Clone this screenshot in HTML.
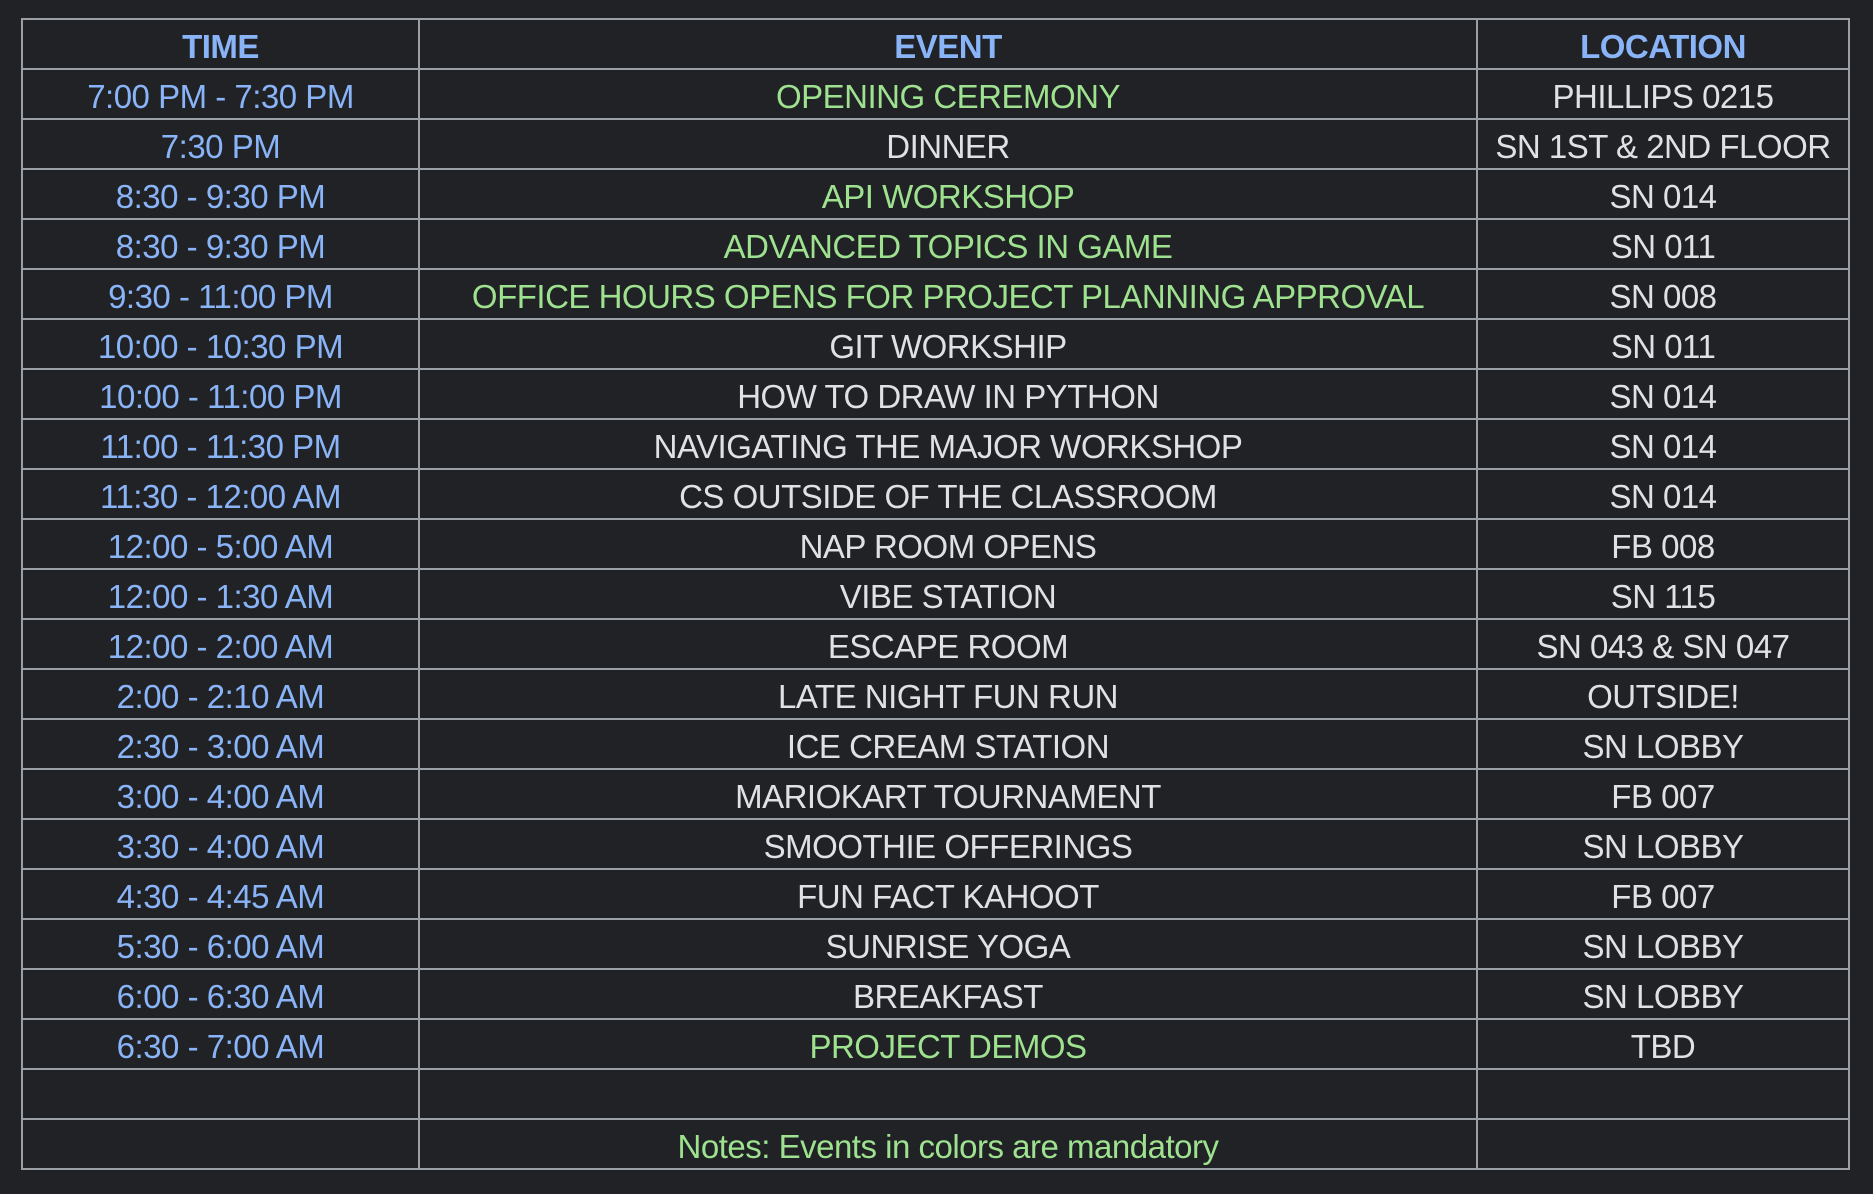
<!DOCTYPE html>
<html><head><meta charset="utf-8"><style>
html,body{margin:0;padding:0;background:#212226;width:1873px;height:1194px;overflow:hidden}
table{position:absolute;left:21px;top:18px;border-collapse:collapse;font-family:"Liberation Sans",sans-serif;font-size:33px;letter-spacing:-0.5px}
td{border:2px solid #9aa0a6;height:48px;padding:0;text-align:center;color:#dfe1e5;white-space:nowrap;line-height:48px}
td span{position:relative;top:3px}
td.a{width:395px;color:#8ab4f8}
td.b{width:1056px}
td.c{width:370px}
tr.h td{color:#8ab4f8;font-weight:bold}
.g{color:#9ee28f !important}
</style></head><body>
<table>
<tr class="h"><td class="a"><span>TIME</span></td><td class="b"><span>EVENT</span></td><td class="c"><span>LOCATION</span></td></tr>
<tr><td class="a"><span>7:00 PM - 7:30 PM</span></td><td class="b g"><span>OPENING CEREMONY</span></td><td class="c"><span>PHILLIPS 0215</span></td></tr>
<tr><td class="a"><span>7:30 PM</span></td><td class="b"><span>DINNER</span></td><td class="c"><span>SN 1ST &amp; 2ND FLOOR</span></td></tr>
<tr><td class="a"><span>8:30 - 9:30 PM</span></td><td class="b g"><span>API WORKSHOP</span></td><td class="c"><span>SN 014</span></td></tr>
<tr><td class="a"><span>8:30 - 9:30 PM</span></td><td class="b g"><span>ADVANCED TOPICS IN GAME</span></td><td class="c"><span>SN 011</span></td></tr>
<tr><td class="a"><span>9:30 - 11:00 PM</span></td><td class="b g"><span>OFFICE HOURS OPENS FOR PROJECT PLANNING APPROVAL</span></td><td class="c"><span>SN 008</span></td></tr>
<tr><td class="a"><span>10:00 - 10:30 PM</span></td><td class="b"><span>GIT WORKSHIP</span></td><td class="c"><span>SN 011</span></td></tr>
<tr><td class="a"><span>10:00 - 11:00 PM</span></td><td class="b"><span>HOW TO DRAW IN PYTHON</span></td><td class="c"><span>SN 014</span></td></tr>
<tr><td class="a"><span>11:00 - 11:30 PM</span></td><td class="b"><span>NAVIGATING THE MAJOR WORKSHOP</span></td><td class="c"><span>SN 014</span></td></tr>
<tr><td class="a"><span>11:30 - 12:00 AM</span></td><td class="b"><span>CS OUTSIDE OF THE CLASSROOM</span></td><td class="c"><span>SN 014</span></td></tr>
<tr><td class="a"><span>12:00 - 5:00 AM</span></td><td class="b"><span>NAP ROOM OPENS</span></td><td class="c"><span>FB 008</span></td></tr>
<tr><td class="a"><span>12:00 - 1:30 AM</span></td><td class="b"><span>VIBE STATION</span></td><td class="c"><span>SN 115</span></td></tr>
<tr><td class="a"><span>12:00 - 2:00 AM</span></td><td class="b"><span>ESCAPE ROOM</span></td><td class="c"><span>SN 043 &amp; SN 047</span></td></tr>
<tr><td class="a"><span>2:00 - 2:10 AM</span></td><td class="b"><span>LATE NIGHT FUN RUN</span></td><td class="c"><span>OUTSIDE!</span></td></tr>
<tr><td class="a"><span>2:30 - 3:00 AM</span></td><td class="b"><span>ICE CREAM STATION</span></td><td class="c"><span>SN LOBBY</span></td></tr>
<tr><td class="a"><span>3:00 - 4:00 AM</span></td><td class="b"><span>MARIOKART TOURNAMENT</span></td><td class="c"><span>FB 007</span></td></tr>
<tr><td class="a"><span>3:30 - 4:00 AM</span></td><td class="b"><span>SMOOTHIE OFFERINGS</span></td><td class="c"><span>SN LOBBY</span></td></tr>
<tr><td class="a"><span>4:30 - 4:45 AM</span></td><td class="b"><span>FUN FACT KAHOOT</span></td><td class="c"><span>FB 007</span></td></tr>
<tr><td class="a"><span>5:30 - 6:00 AM</span></td><td class="b"><span>SUNRISE YOGA</span></td><td class="c"><span>SN LOBBY</span></td></tr>
<tr><td class="a"><span>6:00 - 6:30 AM</span></td><td class="b"><span>BREAKFAST</span></td><td class="c"><span>SN LOBBY</span></td></tr>
<tr><td class="a"><span>6:30 - 7:00 AM</span></td><td class="b g"><span>PROJECT DEMOS</span></td><td class="c"><span>TBD</span></td></tr>
<tr><td class="a"></td><td class="b"></td><td class="c"></td></tr>
<tr><td class="a"></td><td class="b g"><span>Notes: Events in colors are mandatory</span></td><td class="c"></td></tr>
</table>
</body></html>
